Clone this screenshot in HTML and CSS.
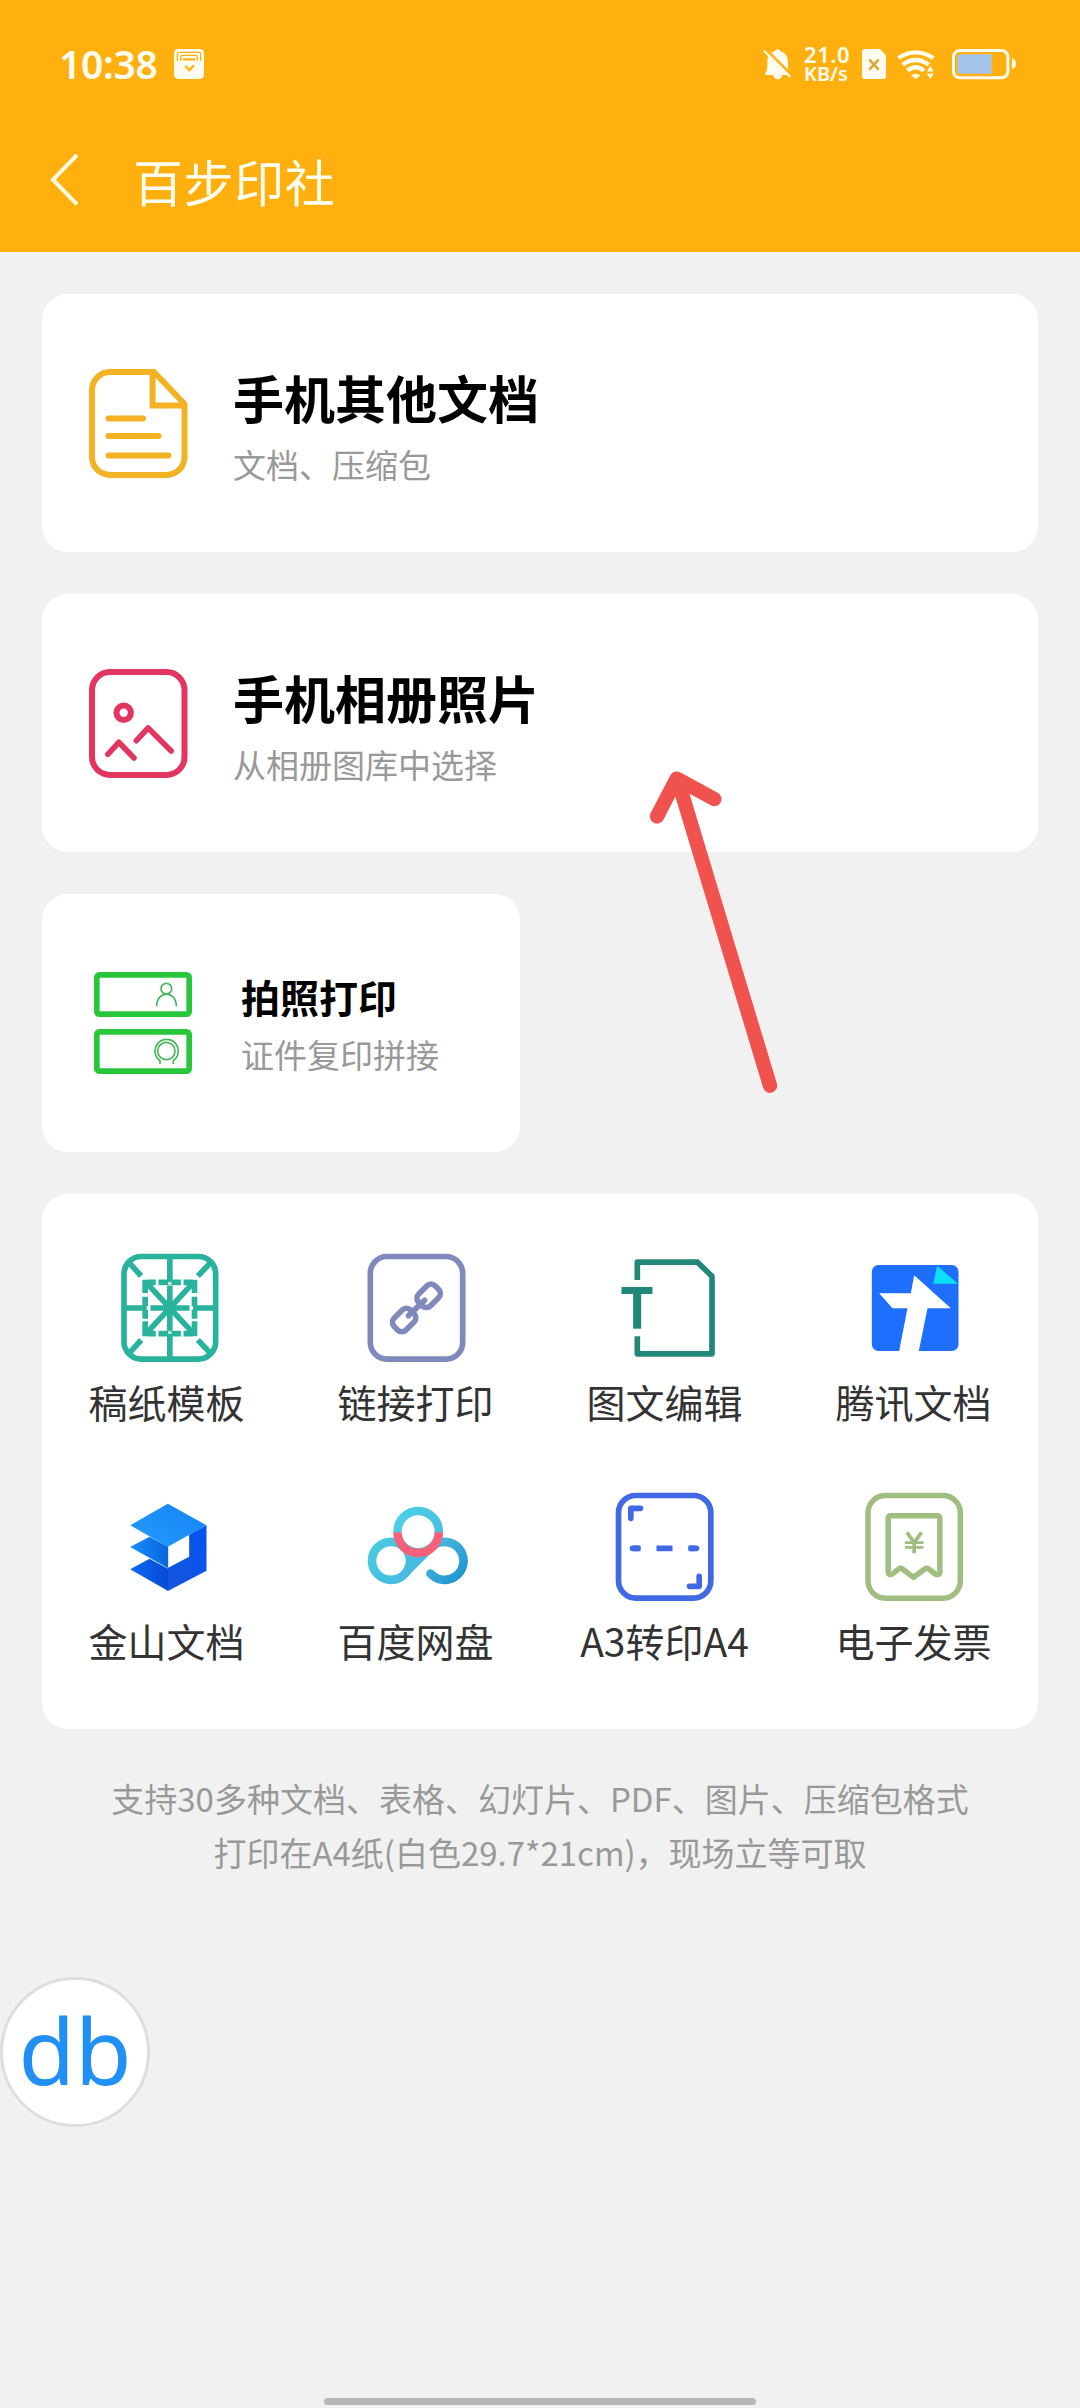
FILE: index.html
```html
<!DOCTYPE html>
<html lang="zh-CN">
<head>
<meta charset="utf-8">
<title>百步印社</title>
<link rel="stylesheet" href="styles.css">
</head>
<body>
<header class="header">
  <div class="status">
    <span class="time">10:38</span>
    <svg class="status-app" width="30" height="30" viewBox="0 0 90 90">
      <rect width="90" height="90" rx="13" fill="#fffdf0"/>
      <path d="M10 35V16a6 6 0 0 1 6-6H74a6 6 0 0 1 6 6V35M20 35V24a5 5 0 0 1 5-5H65a5 5 0 0 1 5 5V35" fill="none" stroke="#ffb00f" stroke-width="4"/>
      <path d="M27 31H63M34 51L46 63L60 49" fill="none" stroke="#ffb00f" stroke-width="7"/>
    </svg>
    <div class="status-right">
      <svg width="28" height="40" viewBox="67 42 84 120">
        <path d="M74 135V128C82 122 80 108 80 96C80 76 90 66 103 64C104 56 118 56 119 64C135 68 142 80 142 98C142 114 142 124 148 130V135H124A13 13 0 0 1 98 135Z" fill="#fffdf0"/>
        <path d="M74 56L154 136" stroke="#ffb00f" stroke-width="8"/>
        <path d="M69 61L149 141" stroke="#fffdf0" stroke-width="6"/>
      </svg>
      <div class="speed">21.0<br>KB/s</div>
      <svg class="sim" width="24" height="40" viewBox="366 42 72 120">
        <path d="M376 57H420L438 76V137Q438 147 428 147H376Q366 147 366 137V67Q366 57 376 57Z" fill="#fffdf0"/>
        <path d="M388 89L416 119M416 89L388 119" stroke="#d9a93a" stroke-width="8"/>
      </svg>
      <svg class="wifi" width="38" height="40" viewBox="472 42 114 120">
        <g fill="none" stroke="#fffdf0" stroke-width="13">
          <path d="M476 84Q528 50 581 84"/>
          <path d="M489 104Q528 76 567 104"/>
          <path d="M503 122Q528 101 553 122"/>
        </g>
        <path d="M514 136Q528 126 542 136L528 148Z" fill="#fffdf0"/>
        <path d="M559 126L572 105L585 126ZM559 129L572 149L585 129Z" fill="#fffdf0" stroke="#ffb00f" stroke-width="3"/>
      </svg>
      <svg class="battery" width="64" height="40" viewBox="636 42 192 120">
        <rect x="640.500" y="61.500" width="163" height="82" rx="19" fill="none" stroke="#fffdf0" stroke-width="9"/>
        <path d="M660 73H755V131H660Q652 131 652 123V81Q652 73 660 73Z" fill="#a5c5e8"/>
        <path d="M816 84Q828 90 828 101Q828 112 816 118Z" fill="#fffdf0"/>
      </svg>
    </div>
  </div>
  <div class="nav">
    <svg class="back" width="30" height="54" viewBox="0 0 90 162"><path d="M84 6L12 80L84 154" fill="none" stroke="#fffbe2" stroke-width="12"/></svg>
    <h1 class="nav-title">百步印社</h1>
  </div>
</header>

<main class="main">
  <section class="card">
    <svg width="120" height="120" viewBox="0 0 120 120" fill="none" stroke="#f2b224" stroke-width="6">
      <path d="M76 9H32A18 18 0 0 0 14 27V94A18 18 0 0 0 32 112H88.500A18 18 0 0 0 106.500 94V41L76 9Z" stroke-linejoin="round"/>
      <path d="M74.600 9V42.500H106"/>
      <path d="M30.500 55.500H65M30.500 73H80.500M30.500 92.500H90.500" stroke-linecap="round"/>
    </svg>
    <div class="card-text"><h2 class="card-title">手机其他文档</h2><p class="card-sub">文档、压缩包</p></div>
  </section>

  <section class="card">
    <svg width="120" height="120" viewBox="0 0 120 120" fill="none" stroke="#e2355f" stroke-width="6">
      <rect x="14" y="9" width="92.500" height="103" rx="18"/>
      <circle cx="45.700" cy="49.700" r="7.200"/>
      <path d="M29.800 91.300L40.800 79.300L56 95M58.400 77.700L70.100 64.900L93.200 88" stroke-width="5.600" stroke-linecap="round" stroke-linejoin="round"/>
    </svg>
    <div class="card-text"><h2 class="card-title">手机相册照片</h2><p class="card-sub">从相册图库中选择</p></div>
  </section>

  <section class="card card-half">
    <svg width="120" height="120" viewBox="156 249 360 360" fill="none" stroke="#27c63b">
      <rect x="200.500" y="284.500" width="277" height="118" rx="8" stroke-width="17"/>
      <rect x="200.500" y="455.500" width="277" height="118" rx="8" stroke-width="17"/>
      <g stroke="#48b65a" stroke-width="5">
        <circle cx="409" cy="326" r="16"/>
        <path d="M380 379C380 330 439 330 439 379"/>
        <circle cx="409" cy="513" r="26"/>
        <path d="M390 552V542A35 35 0 1 1 430 542V552"/>
      </g>
    </svg>
    <div class="card-text"><h2 class="card-title">拍照打印</h2><p class="card-sub">证件复印拼接</p></div>
  </section>

  <section class="grid">
    <div class="item">
      <svg width="120" height="120" viewBox="139.500 84 360 360" fill="none" stroke="#29b39c" stroke-width="17">
        <rect x="190.500" y="109.500" width="275" height="308" rx="52"/>
        <path d="M328 110V182M328 197V332M328 346V418M190 264H254M270 264H387M403 264H466"/>
        <path d="M205 127L242 168M451 127L412 168M205 401L242 360M451 401L412 360M254 184L402 344M402 184L254 344"/>
        <path d="M262 187H286M294 187H361M369 187H394M262 341H286M294 341H361M369 341H394M254 179V219M254 230V296M254 304V349M402 179V219M402 230V296M402 304V349"/>
        <path d="M323 190H333M323 338H333M262 259V269M394 259V269" stroke="#fff" stroke-width="7"/>
      </svg>
      <span class="label">稿纸模板</span>
    </div>
    <div class="item">
      <svg width="120" height="120" viewBox="886.500 84 360 360" fill="none" stroke="#8089bb" stroke-width="17">
        <rect x="929.500" y="109.500" width="277" height="308" rx="50"/>
        <rect x="-35" y="-25" width="70" height="50" rx="18" transform="translate(1104.500 227.500) rotate(-45)"/>
        <rect x="-35" y="-25" width="70" height="50" rx="18" transform="translate(1031 300) rotate(-45)"/>
        <path d="M1044 287L1092 241" stroke-linecap="round"/>
      </svg>
      <span class="label">链接打印</span>
    </div>
    <div class="item">
      <svg width="120" height="120" viewBox="193.500 84 360 360" fill="none" stroke="#228778" stroke-width="17">
        <path d="M290.500 180V126.500H471L514.500 169V401.500H290.500V349" stroke-linejoin="round"/>
        <path d="M243 211.500H336" stroke-width="21"/>
        <path d="M290 220V326" stroke-width="24"/>
      </svg>
      <span class="label">图文编辑</span>
    </div>
    <div class="item">
      <svg width="120" height="120" viewBox="940.500 84 360 360">
        <rect x="994" y="135" width="260" height="258" rx="20" fill="#1e6fff"/>
        <path d="M1190 137L1252 191H1178Z" fill="#0be0f8"/>
        <path d="M1121 166L1231 265H1161L1135 393H1076L1101 265H1056L1016 220H1111Z" fill="#fff"/>
      </svg>
      <span class="label">腾讯文档</span>
    </div>
    <div class="item">
      <svg width="120" height="120" viewBox="139.500 81 360 360">
        <defs>
          <linearGradient id="kTop" x1="0" y1="1" x2="1" y2="0"><stop offset="0" stop-color="#239cfb"/><stop offset="1" stop-color="#1682f6"/></linearGradient>
          <linearGradient id="kMid"><stop offset="0" stop-color="#168ffc"/><stop offset="1" stop-color="#0865dc"/></linearGradient>
          <linearGradient id="kLow"><stop offset="0" stop-color="#0b6af4"/><stop offset="1" stop-color="#0749d4"/></linearGradient>
          <linearGradient id="kSide" x1="0" y1="1" x2="1" y2="0"><stop offset="0" stop-color="#1455dc"/><stop offset="1" stop-color="#0653f2"/></linearGradient>
        </defs>
        <path d="M209 328L267 296L323 326V393Z" fill="url(#kLow)"/>
        <path d="M209 261L267 230L323 260V325Z" fill="url(#kMid)"/>
        <path d="M438 196V332L322 393V324L386 290V224Z" fill="url(#kSide)"/>
        <path d="M322 131L438 196L322 260L209 196Z" fill="url(#kTop)"/>
      </svg>
      <span class="label">金山文档</span>
    </div>
    <div class="item">
      <svg width="120" height="120" viewBox="886.500 81 360 360" fill="none">
        <defs>
          <linearGradient id="bLeft" gradientUnits="userSpaceOnUse" x1="930" y1="240" x2="1100" y2="350"><stop offset="0" stop-color="#4accdf"/><stop offset="1" stop-color="#42b5df"/></linearGradient>
          <linearGradient id="bTop" gradientUnits="userSpaceOnUse" x1="1000" y1="150" x2="1145" y2="220"><stop offset="0" stop-color="#4bd2e9"/><stop offset="1" stop-color="#48bfe1"/></linearGradient>
          <linearGradient id="bRight" gradientUnits="userSpaceOnUse" x1="1110" y1="240" x2="1215" y2="340"><stop offset="0" stop-color="#4abce0"/><stop offset="1" stop-color="#2296d0"/></linearGradient>
        </defs>
        <path d="M1020 276H1115L1036 355Q1020 371 1000 371Z" fill="url(#bLeft)"/>
        <circle cx="991.500" cy="302.500" r="57" fill="#fff" stroke="url(#bLeft)" stroke-width="26"/>
        <path d="M1130 250A57 57 0 1 1 1110 341" stroke="url(#bRight)" stroke-width="26" stroke-linecap="round"/>
        <path d="M1098 283L1133 250" stroke="#fa6279" stroke-width="9"/>
        <circle cx="1073" cy="215" r="62" fill="#fff" stroke="url(#bTop)" stroke-width="25"/>
        <path d="M1011 217A62 62 0 0 0 1135 217" stroke="#fa6078" stroke-width="25"/>
      </svg>
      <span class="label">百度网盘</span>
    </div>
    <div class="item">
      <svg width="120" height="120" viewBox="193.500 81 360 360" fill="none" stroke="#4169e4" stroke-width="17">
        <rect x="234" y="106.500" width="277" height="308" rx="52"/>
        <path d="M271 175V145H300M476 349V379H447" stroke-linecap="round" stroke-linejoin="round"/>
        <path d="M276 265H292M452 265H468" stroke-linecap="round"/>
        <path d="M280 265H300M348 265H396M444 265H464"/>
      </svg>
      <span class="label">A3转印A4</span>
    </div>
    <div class="item">
      <svg width="120" height="120" viewBox="940.500 81 360 360" fill="none" stroke="#9fbe7f" stroke-width="16.500" stroke-linejoin="round">
        <rect x="982.500" y="106.500" width="277" height="308" rx="52"/>
        <path d="M1051 167H1189Q1198 167 1198 176V337Q1198 344 1190 344Q1187 344 1184 342L1165 327Q1159 323 1153 327L1119 352L1086 327Q1080 322 1074 327L1056 342Q1043 347 1043 335V175Q1043 167 1051 167Z"/>
        <path d="M1099 217L1121 248L1143 217M1121 246V280" stroke-width="11"/>
        <path d="M1093 248H1149M1093 262H1149" stroke-width="8"/>
      </svg>
      <span class="label">电子发票</span>
    </div>
  </section>

  <p class="note">支持30多种文档、表格、幻灯片、PDF、图片、压缩包格式<br>打印在A4纸(白色29.7*21cm)，现场立等可取</p>
</main>

<svg class="arrow" width="200" height="380" viewBox="0 0 600 1140" fill="none" stroke="#f0524d" stroke-width="43" stroke-linecap="round" stroke-linejoin="round">
  <path d="M450 1037L175 125M111 229L170 116L283 177"/>
</svg>
<div class="float-btn">db</div>
<div class="home-bar"></div>
</body>
</html>
```
FILE: styles.css
```css
* { box-sizing: border-box; margin: 0; padding: 0; }

body {
  position: relative;
  width: 1080px;
  height: 2408px;
  overflow: hidden;
  background: #f1f1f1;
  font-family: "Noto Sans CJK SC", sans-serif;
}

svg { display: block; flex: none; }

.header { height: 252px; background: #ffb00f; color: #fffdf0; }

.status {
  display: flex;
  align-items: center;
  height: 108px;
  padding: 20px 64px 0 59px;
}
.time {
  width: 115px;
  font: 600 39px/50px "Noto Sans", sans-serif;
  letter-spacing: -0.3px;
}
.status-right { display: flex; align-items: center; margin-left: auto; }
.speed {
  width: 46px;
  margin: 0 12px 0 13px;
  font: 600 20px/20px "Noto Sans", sans-serif;
  white-space: nowrap;
}
.speed::first-line { font-size: 22px; letter-spacing: 0.6px; }
.wifi { margin-left: 11px; }
.battery { margin-left: 17px; }

.nav {
  display: flex;
  align-items: center;
  height: 144px;
  padding-left: 49px;
}
.nav-title {
  margin-left: 54px;
  font-size: 50px;
  font-weight: 400;
  line-height: 74px;
  letter-spacing: 0.6px;
}

.main {
  display: flex;
  flex-direction: column;
  gap: 42px;
  padding: 42px;
}

.card {
  display: flex;
  align-items: center;
  gap: 35px;
  height: 258px;
  padding-left: 36px;
  border-radius: 26px;
  background: #fff;
}
.card-text { display: flex; flex-direction: column; gap: 6px; }
.card-title {
  padding-top: 1px;
  color: #000;
  font-size: 51px;
  font-weight: 700;
  line-height: 74px;
}
.card-sub { color: #999; font-size: 33px; line-height: 48px; }

.card-half { width: 478px; gap: 39px; padding-left: 40px; }
.card-half .card-title { padding-top: 0; font-size: 39px; line-height: 56px; }

.grid {
  display: grid;
  grid-template-columns: repeat(4, 1fr);
  row-gap: 56px;
  height: 535px;
  padding-top: 54px;
  align-content: start;
  border-radius: 26px;
  background: #fff;
}
.item { display: flex; flex-direction: column; align-items: center; gap: 3px; }
.label { color: #333; font-size: 39px; line-height: 60px; white-space: nowrap; }

.note {
  color: #999;
  font-size: 33px;
  line-height: 54px;
  text-align: center;
  white-space: nowrap;
}

.arrow { position: absolute; left: 620px; top: 740px; }

.float-btn {
  position: absolute;
  left: 0;
  top: 1977px;
  width: 150px;
  height: 150px;
  border: 3px solid #dedede;
  border-radius: 50%;
  background: #fff;
  color: #2090f5;
  font: 400 92px/140px "Noto Sans", sans-serif;
  text-align: center;
}

.home-bar {
  position: absolute;
  left: 324px;
  top: 2398px;
  width: 432px;
  height: 7px;
  border-radius: 4px;
  background: #b8b8b8;
}
```
